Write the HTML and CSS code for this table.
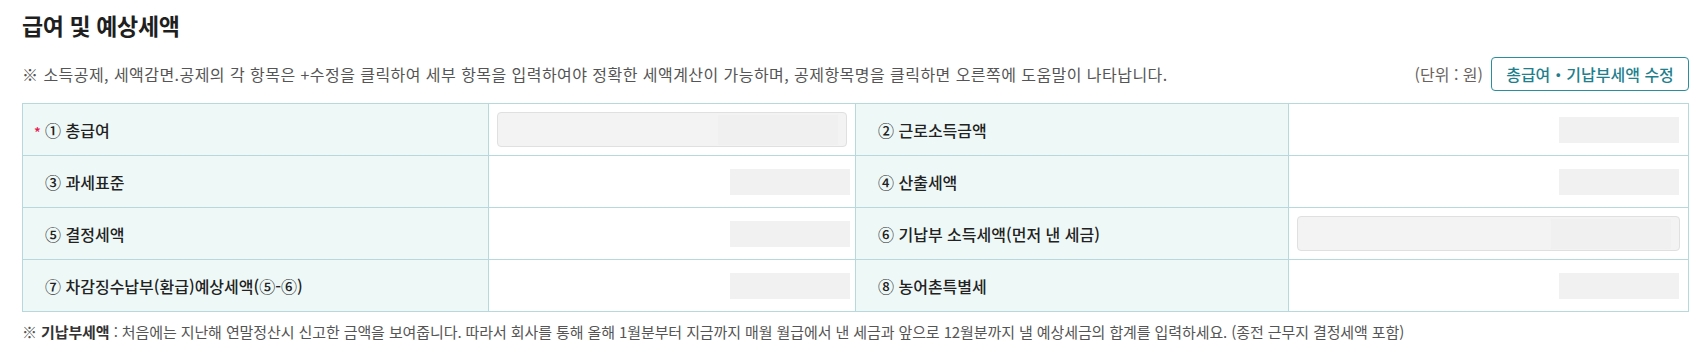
FILE: index.html
```html
<!DOCTYPE html>
<html lang="ko">
<head>
<meta charset="utf-8">
<title>급여 및 예상세액</title>
<link rel="stylesheet" href="styles.css">
</head>
<body>
<div class="wrap">
  <h2 class="title">급여 및 예상세액</h2>
  <div class="info-row">
    <p class="info">※ 소득공제, 세액감면.공제의 각 항목은 +수정을 클릭하여 세부 항목을 입력하여야 정확한 세액계산이 가능하며, 공제항목명을 클릭하면 오른쪽에 도움말이 나타납니다.</p>
    <div class="info-right">
      <span class="unit">(단위 : 원)</span>
      <button class="edit-btn" type="button">총급여・기납부세액 수정</button>
    </div>
  </div>
  <table class="tax-table">
    <colgroup>
      <col class="c1"><col class="c2"><col class="c3"><col class="c4">
    </colgroup>
    <tbody>
      <tr>
        <th><span class="req">*</span>① 총급여</th>
        <td class="input-cell"><div class="ro-input"><span class="ro-val"></span></div></td>
        <th>② 근로소득금액</th>
        <td class="val-cell"><span class="val"></span></td>
      </tr>
      <tr>
        <th>③ 과세표준</th>
        <td class="val-cell"><span class="val"></span></td>
        <th>④ 산출세액</th>
        <td class="val-cell"><span class="val"></span></td>
      </tr>
      <tr>
        <th>⑤ 결정세액</th>
        <td class="val-cell"><span class="val"></span></td>
        <th>⑥ 기납부 소득세액(먼저 낸 세금)</th>
        <td class="input-cell"><div class="ro-input"><span class="ro-val"></span></div></td>
      </tr>
      <tr>
        <th>⑦ 차감징수납부(환급)예상세액(⑤-⑥)</th>
        <td class="val-cell"><span class="val"></span></td>
        <th>⑧ 농어촌특별세</th>
        <td class="val-cell"><span class="val"></span></td>
      </tr>
    </tbody>
  </table>
  <p class="note">※ <strong>기납부세액</strong> : 처음에는 지난해 연말정산시 신고한 금액을 보여줍니다. 따라서 회사를 통해 올해 1월분부터 지금까지 매월 월급에서 낸 세금과 앞으로 12월분까지 낼 예상세금의 합계를 입력하세요. (종전 근무지 결정세액 포함)</p>
</div>
</body>
</html>
```

FILE: styles.css
```css
* { box-sizing: border-box; }
html, body {
  margin: 0;
  padding: 0;
  background: #fff;
}
body {
  font-family: "Noto Sans CJK KR", "Noto Sans", sans-serif;
  color: #222;
}
.wrap {
  padding: 0 15px 0 22px;
}
.title {
  margin: 0;
  font-size: 23px;
  font-weight: 700;
  letter-spacing: -0.4px;
  line-height: 50px;
  color: #1f1f1f;
}
.info-row {
  display: flex;
  justify-content: space-between;
  align-items: center;
  margin-top: 7px;
}
.info {
  margin: 0;
  font-size: 16px;
  letter-spacing: 0.45px;
  line-height: 20px;
  color: #555;
}
.info-right {
  display: flex;
  align-items: center;
  gap: 8px;
}
.unit {
  font-size: 16px;
  color: #6a625c;
}
.edit-btn {
  height: 34px;
  width: 198px;
  padding: 0;
  border: 1px solid #2b8e9c;
  border-radius: 4px;
  background: #fff;
  color: #1f7f8d;
  font-family: inherit;
  font-size: 16px;
  font-weight: 500;
}
.tax-table {
  width: 100%;
  margin-top: 12px;
  border-collapse: collapse;
  border: 1px solid #b7d8dc;
}
.c1 { width: 28%; }
.c2 { width: 22%; }
.c3 { width: 26%; }
.c4 { width: 24%; }
.tax-table th,
.tax-table td {
  height: 52px;
  border: 1px solid #b7d8dc;
  padding: 0;
}
.tax-table th {
  background: #eef8f7;
  text-align: left;
  padding-left: 22px;
  font-size: 16px;
  font-weight: 500;
  color: #222;
  position: relative;
}
.req {
  position: absolute;
  left: 11px;
  top: 50%;
  transform: translateY(-35%);
  color: #e8194f;
  font-size: 14px;
  line-height: 14px;
}
.input-cell {
  padding: 0 8px !important;
}
.ro-input {
  height: 35px;
  background: #f3f3f3;
  border: 1px solid #e0e0e0;
  border-radius: 4px;
  display: flex;
  justify-content: flex-end;
  align-items: center;
  padding-right: 8px;
}
.ro-val {
  width: 120px;
  height: 30px;
  background: #f0f0f0;
}
.val-cell {
  text-align: right;
  padding-right: 5px !important;
}
.tax-table tr td.val-cell:last-child {
  padding-right: 9px !important;
}
.val {
  display: inline-block;
  width: 120px;
  height: 26px;
  background: #f1f1f1;
  vertical-align: middle;
}
.note {
  margin: 10px 0 0;
  font-size: 15px;
  letter-spacing: -0.1px;
  line-height: 20px;
  color: #555;
}
.note strong {
  color: #333;
  font-weight: 700;
}
```
